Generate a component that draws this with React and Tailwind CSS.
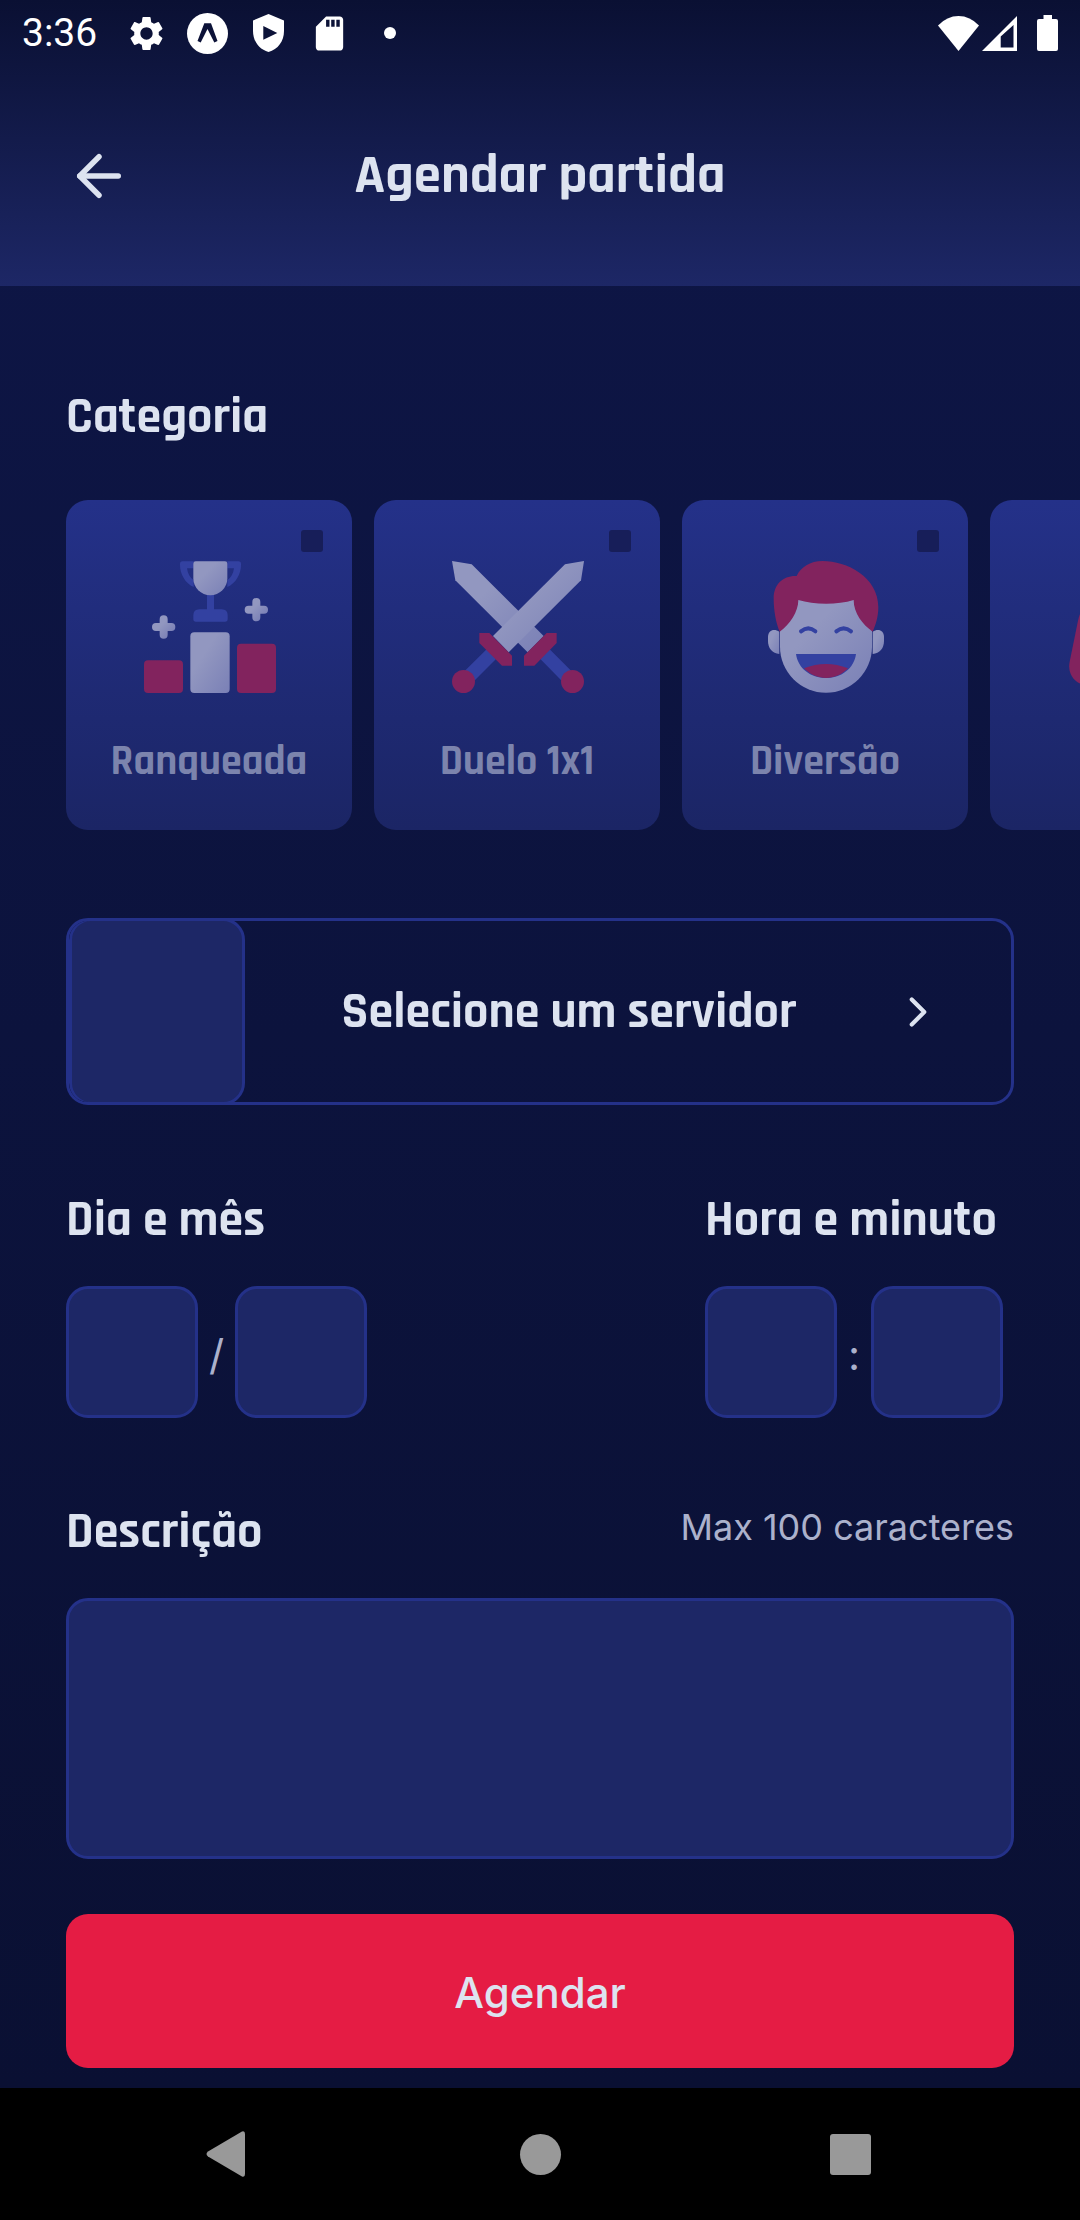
import React from "react";
import { MdSettings, MdSdCard } from "react-icons/md";
import { ArrowLeft, ChevronRight } from "lucide-react";

const heading = "font-['Rajdhani','Roboto',sans-serif] font-bold text-[#dde3f0] whitespace-nowrap";

function Defs({ id }) {
  return (
    <defs>
      <linearGradient id={id} x1="0" y1="0" x2="1" y2="1">
        <stop offset="0.35" stopColor="#9297c0" />
        <stop offset="1" stopColor="#7a80b6" />
      </linearGradient>
    </defs>
  );
}

function Podium() {
  return (
    <svg className="block size-[132px]" viewBox="0 0 396 396">
      <Defs id="podium" />
      <path fill="#3341a1" fillRule="evenodd" d="M116 1H149V78C124 67 108 40 108 12V9Q108 1 116 1ZM129 22H149V58C138 50 131 38 129 22Z" />
      <path fill="#3341a1" fillRule="evenodd" d="M283 1H250V78C275 67 291 40 291 12V9Q291 1 283 1ZM270 22H250V58C261 50 268 38 270 22Z" />
      <path fill="#3341a1" d="M189 100H210V145H233Q251 145 251 163V174Q251 182 243 182H156Q148 182 148 174V163Q148 145 166 145H189Z" />
      <path fill="url(#podium)" d="M148 8Q148 1 155 1H243Q250 1 250 8V52A51 51 0 0 1 148 52Z" />
      <path stroke="url(#podium)" strokeWidth="24" strokeLinecap="round" fill="none" d="M36 198H82M59 175V221" />
      <path stroke="url(#podium)" strokeWidth="24" strokeLinecap="round" fill="none" d="M314 146H360M337 123V169" />
      <rect x="0" y="298" width="117" height="98" rx="12" fill="#82235e" />
      <rect x="139" y="214" width="118" height="182" rx="12" fill="url(#podium)" />
      <rect x="279" y="248" width="117" height="148" rx="12" fill="#82235e" />
    </svg>
  );
}

function Swords() {
  return (
    <svg className="block size-[132px]" viewBox="276 243 396 396">
      <Defs id="blade" />
      <path fill="#3341a1" d="M380 508L408 537L343 602L314 573ZM569 508L541 537L605 602L634 573Z" />
      <path fill="url(#blade)" d="M276 243L335 253L551 468L503 517L286 301Z" />
      <path fill="url(#blade)" d="M672 243L615 253L399 468L446 517L663 301Z" />
      <path fill="#82235e" d="M358 459H388L456 527V557H426L358 489ZM590 459H560L492 527V557H523L590 489Z" />
      <circle cx="310.5" cy="604.5" r="34.5" fill="#82235e" />
      <circle cx="637.5" cy="604.5" r="34.5" fill="#82235e" />
    </svg>
  );
}

function Laugh() {
  return (
    <svg className="block size-[132px]" viewBox="270 243 396 396">
      <Defs id="skin" />
      <path fill="url(#skin)" d="M328 455C314 446 294 448 294 472V482C294 506 307 519 328 522Z" />
      <path fill="url(#skin)" d="M608 455C622 446 642 448 642 472V482C642 506 629 519 608 522Z" />
      <path fill="url(#skin)" d="M330 440V500A138 138 0 0 0 606 500V440L560 345H376Z" />
      <path fill="#82235e" d="M329 455C318 430 311 392 311 355C311 312 340 286 380 288C392 262 420 243 458 243C530 243 625 290 625 382C625 410 617 435 608 455C578 434 551 400 551 360C500 376 430 374 385 360C385 395 360 433 329 455Z" />
      <path fill="none" stroke="#3341a1" strokeWidth="12" strokeLinecap="round" d="M393 454Q415 436 436 454M499 454Q521 436 543 454" />
      <path fill="#3341a1" d="M378 522H558C552 565 515 594 468 594C421 594 384 565 378 522Z" />
      <path fill="#82235e" d="M402 565Q468 539 534 565C515 585 492 594 468 594C444 594 421 585 402 565Z" />
    </svg>
  );
}

function Megaphone() {
  return (
    <svg className="block size-[132px]" viewBox="1191 243 396 396">
      <path fill="#82235e" d="M1260 370C1236 378 1226 398 1221 422L1196 545C1190 575 1204 603 1232 612L1300 600V370Z" />
    </svg>
  );
}

const categories = [
  { title: "Ranqueada", Icon: Podium },
  { title: "Duelo 1x1", Icon: Swords },
  { title: "Diversão", Icon: Laugh },
  { title: "", Icon: Megaphone },
];

function Category({ title, Icon }) {
  return (
    <div className="relative h-[330px] w-[286px] shrink-0 rounded-[22px] bg-linear-to-b from-[#243189] to-[#1b2565] pt-[61px]">
      <div className="absolute top-[30px] left-[235px] size-[22px] rounded-[3px] bg-[#171e59]" />
      <div className="ml-[78px]"><Icon /></div>
      <div className="mt-[45px] flex justify-center">
        <span className="font-['Rajdhani','Roboto',sans-serif] text-[42px] leading-[48px] font-bold whitespace-nowrap text-[#7c84ad]">{title}</span>
      </div>
    </div>
  );
}

function Field() {
  return <div className="size-[132px] rounded-[22px] border-[3px] border-[#243189] bg-[#1d2766]" />;
}

function StatusBar() {
  return (
    <div className="flex h-[66px] items-center text-white">
      <span className="ml-[22px] w-[76px] font-['Roboto',sans-serif] text-[39px] leading-[68px]">3:36</span>
      <MdSettings className="ml-[27.5px] size-[41px]" />
      <svg className="ml-[20px] size-[41px]" viewBox="0 0 41 41">
        <circle cx="20.5" cy="20.5" r="20.5" fill="#fff" />
        <path fill="#0c1238" d="M17.3 10.3H24L30.5 28L27.3 29.500L20.500 16L13.700 29.500L10.500 28Z" />
      </svg>
      <svg className="ml-[25px] h-[38px] w-[31px]" viewBox="0 0 31 38">
        <path fill="#fff" fillRule="evenodd" d="M15.5 0L31 6.500V17C31 27 25 35.500 15.5 38C6 35.500 0 27 0 17V6.500ZM10.300 12V25.700L24.300 18.900Z" />
      </svg>
      <MdSdCard className="ml-[25px] size-[41px]" />
      <div className="ml-[34px] size-3 rounded-full bg-white" />
      <svg className="ml-auto h-[35px] w-[41px]" viewBox="0 0 41 35">
        <path fill="#fff" d="M0 9.500Q9 0 20.500 0T41 9.500L20.500 35Z" />
      </svg>
      <svg className="ml-[3px] h-[35px] w-[35px]" viewBox="0 0 35 35">
        <path fill="#fff" fillRule="evenodd" d="M35 0V35H0ZM31.500 9L18.700 20.500V31.500H31.500Z" />
      </svg>
      <svg className="mr-[22px] ml-[20px] h-9 w-[21px]" viewBox="0 0 21 36">
        <path fill="#fff" d="M6.500 0H15V4H19Q21 4 21 6V34Q21 36 19 36H2Q0 36 0 34V6Q0 4 2 4H6.500Z" />
      </svg>
    </div>
  );
}

export default function App() {
  return (
    <div className="flex h-[2220px] w-[1080px] flex-col overflow-hidden bg-black">
      <div className="flex h-[2088px] flex-col bg-linear-to-b from-[#0e1647] to-[#0a1033]">
        <header className="h-[286px] bg-linear-to-b from-[#0a1033] to-[#1d2766]">
          <StatusBar />
          <div className="flex h-[220px] items-center justify-between px-[66px]">
            <ArrowLeft className="size-[66px] text-[#dde3f0]" strokeWidth={2} />
            <h1 className={heading + " text-[55px] leading-[66px]"}>Agendar partida</h1>
            <div className="w-[66px]" />
          </div>
        </header>

        <h2 className={heading + " mt-[101px] ml-[66px] self-start text-[50px] leading-[60px]"}>Categoria</h2>

        <div className="mt-[53px] flex gap-[22px] overflow-hidden pl-[66px]">
          {categories.map((c, i) => <Category key={i} {...c} />)}
        </div>

        <div className="mx-[66px] mt-[88px] flex h-[187px] items-center overflow-hidden rounded-[22px] border-[3px] border-[#243189]">
          <div className="h-[187px] w-[176px] shrink-0 rounded-[22px] border-[3px] border-[#243189] bg-[#1d2766]" />
          <div className={heading + " flex flex-1 justify-center text-[50px] leading-[60px]"}><span>Selecione um servidor</span></div>
          <ChevronRight className="mr-[68px] size-[50px] text-[#dde3f0]" strokeWidth={2} />
        </div>

        <div className="mt-[85px] flex justify-between pr-[77px] pl-[66px]">
          <div>
            <h2 className={heading + " text-[50px] leading-[60px]"}>Dia e mês</h2>
            <div className="mt-[36px] flex items-center">
              <Field />
              <span className="w-[37px] pt-[4px] text-center font-['Inter',sans-serif] text-[42px] text-[#abb1cc]">/</span>
              <Field />
            </div>
          </div>
          <div className="w-[298px]">
            <h2 className={heading + " text-[50px] leading-[60px]"}>Hora e minuto</h2>
            <div className="mt-[36px] flex items-center">
              <Field />
              <span className="w-[34px] pt-[4px] text-center font-['Inter',sans-serif] text-[42px] text-[#abb1cc]">:</span>
              <Field />
            </div>
          </div>
        </div>

        <div className="mx-[66px] mt-[77px] flex justify-between">
          <h2 className={heading + " text-[50px] leading-[74px]"}>Descrição</h2>
          <span className="font-['Inter',sans-serif] text-[36px] leading-[64px] text-[#abb1cc]">Max 100 caracteres</span>
        </div>
        <div className="mx-[66px] mt-[29px] h-[261px] rounded-[22px] border-[3px] border-[#243189] bg-[#1d2766]" />
        <button className="mx-[66px] mt-[55px] flex h-[154px] items-center justify-center rounded-[22px] bg-[#e51c44] pt-[2px] font-['Inter',sans-serif] text-[42px] font-medium text-[#dde3f0]">
          Agendar
        </button>
      </div>

      <nav className="flex h-[132px] items-center pl-[206px]">
        <svg className="h-[46px] w-[39px]" viewBox="0 0 39 46">
          <path fill="#999" d="M36 .500Q39 -.500 39 3V43Q39 46.500 36 45.500L2 25.500Q-1 23 2 20.500Z" />
        </svg>
        <div className="ml-[275px] size-[41px] rounded-full bg-[#999]" />
        <div className="ml-[269px] size-[41px] rounded-[3px] bg-[#999]" />
      </nav>
    </div>
  );
}
